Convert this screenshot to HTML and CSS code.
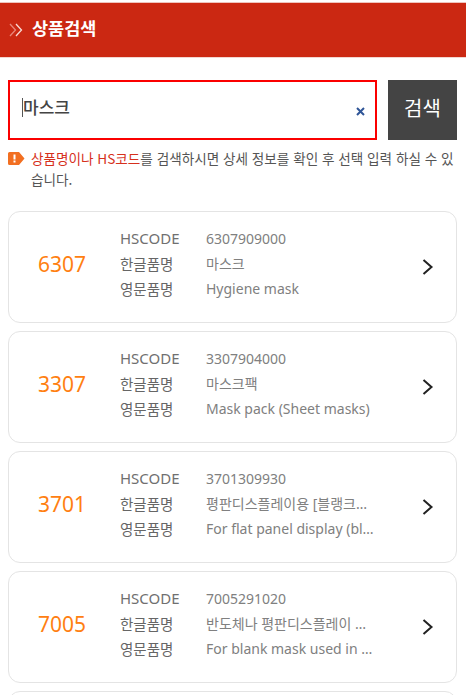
FILE: index.html
```html
<!DOCTYPE html>
<html lang="ko">
<head>
<meta charset="utf-8">
<title>상품검색</title>
<link rel="stylesheet" href="styles.css">
</head>
<body>
<header class="top">
  <svg class="top-icon" width="15" height="14" viewBox="0 0 15 14"><path d="M1 1l5.500 6L1 13" fill="none" stroke="#e9877a" stroke-width="1.300"/><path d="M7 1l5.500 6L7 13" fill="none" stroke="#f8dcd6" stroke-width="1.300"/></svg>
  <h1 class="top-title">상품검색</h1>
</header>
<main class="content">
  <form class="search">
    <div class="search-box">
      <span class="caret"></span><span class="query">마스크</span>
      <svg class="clear" width="9" height="9" viewBox="0 0 9 9"><path d="M1 1l7 7M8 1L1 8" stroke="#2f5597" stroke-width="2"/></svg>
    </div>
    <button class="search-btn" type="button">검색</button>
  </form>
  <div class="notice">
    <svg class="notice-icon" width="17" height="13" viewBox="0 0 17 13"><path d="M1.500 0H11l5.500 6.500L11 13H1.500A1.500 1.500 0 0 1 0 11.500v-10A1.500 1.500 0 0 1 1.500 0z" fill="#f26f21"/><rect x="5.500" y="2.500" width="2" height="5" fill="#fff"/><rect x="5.500" y="8.500" width="2" height="2" fill="#fff"/></svg>
    <p class="notice-text"><span class="hl">상품명이나 HS코드</span>를 검색하시면 상세 정보를 확인 후 선택 입력 하실 수 있습니다.</p>
  </div>
  <ul class="list">
    <li class="card">
      <div class="code">6307</div>
      <dl class="info">
        <dt class="latin">HSCODE</dt><dd>6307909000</dd>
        <dt>한글품명</dt><dd>마스크</dd>
        <dt>영문품명</dt><dd>Hygiene mask</dd>
      </dl>
      <svg class="arrow" width="12" height="18" viewBox="0 0 12 18"><path d="M1.500 2L9.500 9l-8 7" fill="none" stroke="#222" stroke-width="2"/></svg>
    </li>
    <li class="card">
      <div class="code">3307</div>
      <dl class="info">
        <dt class="latin">HSCODE</dt><dd>3307904000</dd>
        <dt>한글품명</dt><dd>마스크팩</dd>
        <dt>영문품명</dt><dd>Mask pack (Sheet masks)</dd>
      </dl>
      <svg class="arrow" width="12" height="18" viewBox="0 0 12 18"><path d="M1.500 2L9.500 9l-8 7" fill="none" stroke="#222" stroke-width="2"/></svg>
    </li>
    <li class="card">
      <div class="code">3701</div>
      <dl class="info">
        <dt class="latin">HSCODE</dt><dd>3701309930</dd>
        <dt>한글품명</dt><dd>평판디스플레이용 [블랭크마스크]</dd>
        <dt>영문품명</dt><dd>For flat panel display (blank mask)</dd>
      </dl>
      <svg class="arrow" width="12" height="18" viewBox="0 0 12 18"><path d="M1.500 2L9.500 9l-8 7" fill="none" stroke="#222" stroke-width="2"/></svg>
    </li>
    <li class="card">
      <div class="code">7005</div>
      <dl class="info">
        <dt class="latin">HSCODE</dt><dd>7005291020</dd>
        <dt>한글품명</dt><dd>반도체나 평판디스플레이 제조용</dd>
        <dt>영문품명</dt><dd>For blank mask used in semiconductor</dd>
      </dl>
      <svg class="arrow" width="12" height="18" viewBox="0 0 12 18"><path d="M1.500 2L9.500 9l-8 7" fill="none" stroke="#222" stroke-width="2"/></svg>
    </li>
    <li class="card"></li>
  </ul>
</main>
</body>
</html>
```

FILE: styles.css
```css
* { box-sizing: border-box; }
html, body { margin: 0; padding: 0; height: 100%; overflow: hidden; }
body {
  background: #fff;
  font-family: "Noto Sans", "Noto Sans CJK KR", sans-serif;
  color: #666;
}
.top {
  display: flex;
  align-items: center;
  height: 54px;
  margin-top: 3px;
  padding-left: 9px;
  background: #cb2812;
  box-shadow: 0 -1px 0 #efc4bc, 0 1px 0 #f3d6d0;
}
.top-icon { margin-right: 8px; margin-bottom: 1px; }
.top-title {
  margin: 0 0 5px;
  font-family: "Noto Sans CJK KR", sans-serif;
  font-size: 17.500px;
  font-weight: 700;
  color: #fff;
}
.content { padding: 23px 9px 0 8px; }
.search { display: flex; gap: 11px; }
.search-box {
  position: relative;
  display: flex;
  align-items: center;
  width: 369px;
  height: 60px;
  padding-left: 12px;
  border: 2px solid #fb0000;
  background: #fff;
}
.caret { width: 1px; height: 19px; margin-bottom: 6px; background: #555; }
.query {
  margin-bottom: 8px;
  font-family: "Noto Sans CJK KR", sans-serif;
  font-size: 17px;
  font-weight: 500;
  color: #444;
}
.clear { position: absolute; right: 10px; top: 25px; }
.search-btn {
  width: 69px;
  height: 60px;
  border: 0;
  padding: 0 0 6px;
  background: #444;
  color: #fff;
  font-family: "Noto Sans CJK KR", sans-serif;
  font-size: 20px;
}
.notice { display: flex; margin-top: 8px; }
.notice-icon { flex: none; margin-top: 4px; margin-right: 6px; }
.notice-text {
  margin: 0;
  font-family: "Noto Sans CJK KR", sans-serif;
  font-size: 13.600px;
  line-height: 21px;
  color: #555;
}
.hl { color: #d6301c; }
.list { list-style: none; margin: 21px 0 0; padding: 0; display: flex; flex-direction: column; gap: 8px; }
.card {
  display: flex;
  align-items: center;
  flex: none;
  height: 112px;
  border: 1px solid #e4e4e4;
  border-radius: 12px;
  background: #fff;
}
.code {
  width: 111px;
  margin-bottom: 6px;
  padding-left: 29px;
  font-size: 21px;
  color: #ff8011;
}
.info {
  display: grid;
  grid-template-columns: 86px 170px;
  grid-auto-rows: 25px;
  align-items: center;
  width: 296px;
  margin: 0 0 8px;
  font-size: 14.500px;
}
.info dt { color: #666; }
.info dt.latin { font-size: 15px; color: #707070; }
.info dd {
  margin: 0;
  color: #808080;
  font-size: 14px;
  white-space: nowrap;
  overflow: hidden;
  text-overflow: ellipsis;
}
.arrow { margin-left: 6px; }
```
